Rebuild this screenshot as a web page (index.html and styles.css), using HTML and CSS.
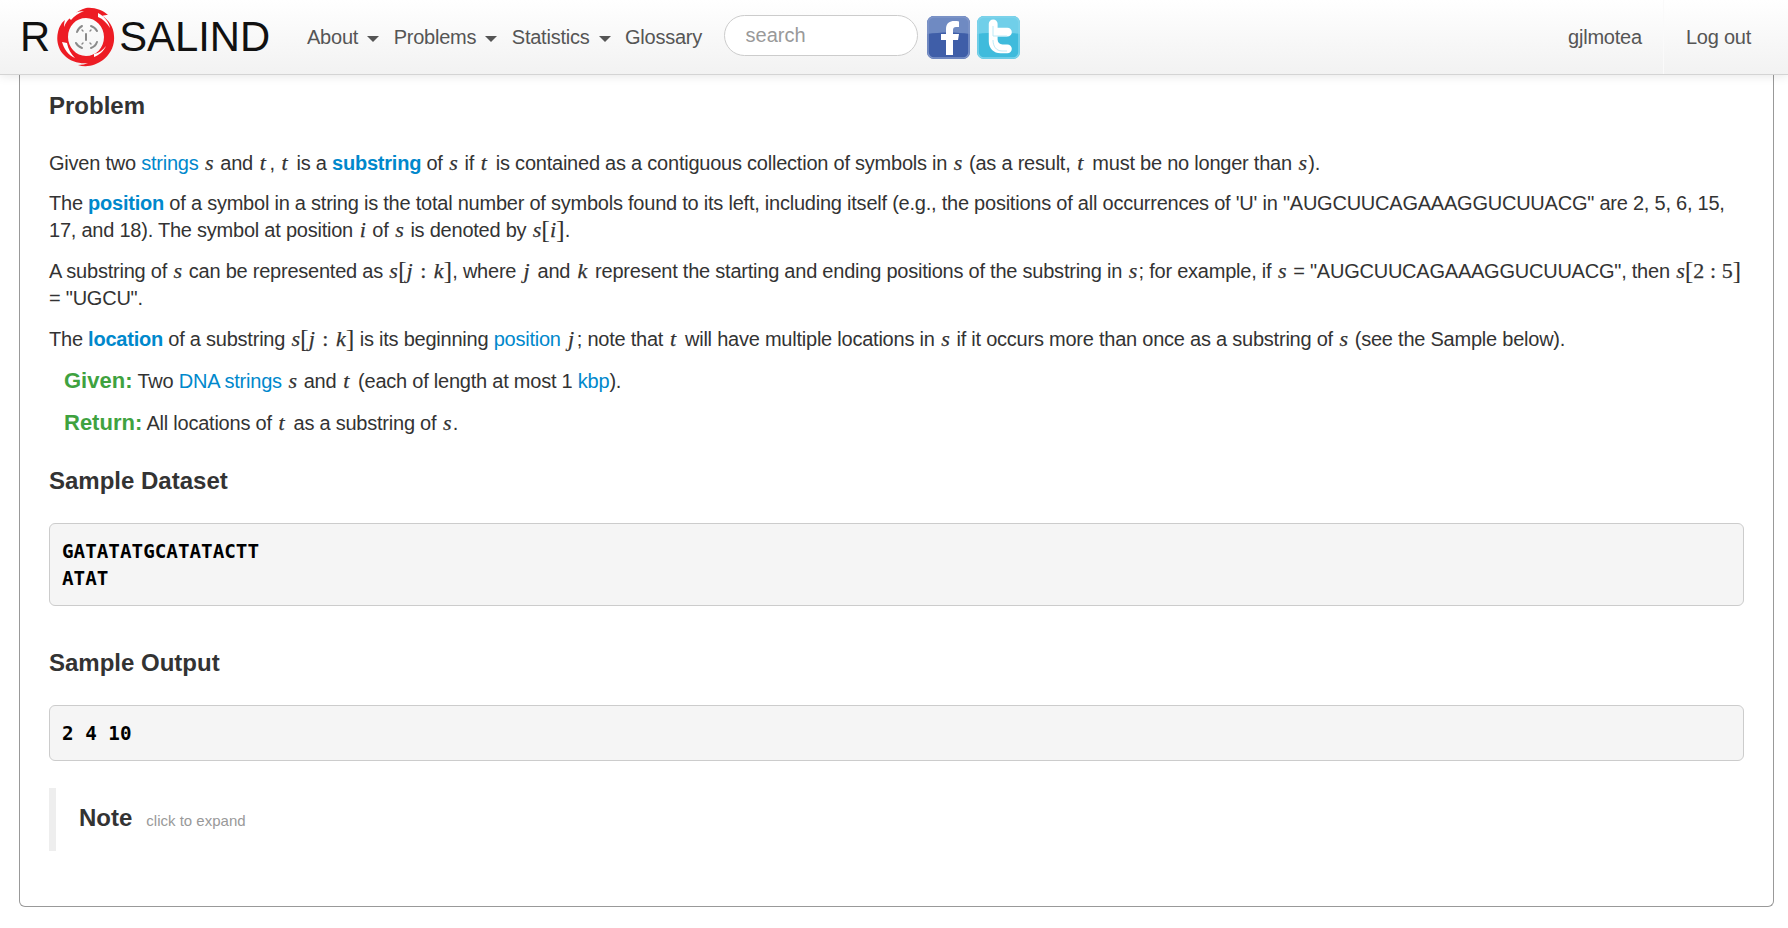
FILE: index.html
```html
<!DOCTYPE html>
<html lang="en">
<head>
<meta charset="utf-8">
<title>Rosalind</title>
<link rel="stylesheet" href="styles.css">
</head>
<body>
<header class="navbar">
  <a class="brand" href="#">
    <span>R</span>
    <svg class="logo" viewBox="0 0 64 64" width="64" height="64" aria-hidden="true">
      <path fill="#ed1c24" d="M32 3C40 2 49 5 54 10C52 10 50 10 48 11C54 14 60 22 60 31C61 42 55 50 49 55C42 60 33 63 24 60C28 60 32 59 34 58C27 59 16 57 10 50C4 44 2 35 4 27C5 22 8 17 11 15C10 18 10 20 10 22C13 14 22 6 32 3ZM32 13C22 13 14 21 14 32C14 42 22 51 32 51C42 51 50 43 50 32C50 22 42 13 32 13Z"/>
      <path fill="#fff" d="M44 8C50 11 55 17 56 23C53 18 49 14 44 12ZM8 37C10 44 14 50 21 53C17 49 14 44 13 38ZM40 52C45 50 50 46 52 41C49 45 45 48 40 49ZM14 12C19 8 24 6 30 6C25 8 20 11 17 15Z"/>
      <g fill="none" stroke="#8a8a8a" stroke-width="2" stroke-linecap="round">
        <path d="M23 27C24 24 26 22 28 21"/>
        <path d="M37 21C40 22 42 24 43 26"/>
        <path d="M43 37C42 40 40 42 37 43"/>
        <path d="M28 43C25 42 23 40 22 38"/>
        <path d="M32 29V35"/>
        <path d="M28 25L29 26M36 26L37 25M28 39L29 38M36 38L37 39" stroke-width="1.4"/>
      </g>
    </svg>
    <span class="brand-rest">SALIND</span>
  </a>
  <nav class="nav-main">
    <a href="#">About<b class="caret"></b></a>
    <a href="#">Problems<b class="caret"></b></a>
    <a href="#">Statistics<b class="caret"></b></a>
    <a href="#">Glossary</a>
  </nav>
  <input class="search" type="text" placeholder="search">
  <div class="social">
    <svg viewBox="0 0 43 43" width="43" height="43" aria-hidden="true">
      <rect width="43" height="43" rx="7" fill="#3f5ea8"/>
      <path d="M0 7a7 7 0 0 1 7-7h29a7 7 0 0 1 7 7v11c-14-2-29-2-43 0z" fill="#6f8ac2"/>
      <rect x="1" y="1" width="41" height="41" rx="6" fill="none" stroke="#7f95c8" stroke-width="1.5"/>
      <path d="M19 39V24h-5v-6h5v-5c0-6 4-8 8-8 2 0 4 0 5 .5v5.500h-3c-2 0-3 1-3 3V18h6l-1 6h-5v15z" fill="#fff"/>
    </svg>
    <svg viewBox="0 0 43 43" width="43" height="43" aria-hidden="true">
      <rect width="43" height="43" rx="7" fill="#3fbbdc"/>
      <path d="M0 7a7 7 0 0 1 7-7h29a7 7 0 0 1 7 7v11c-14-2-29-2-43 0z" fill="#70cfe9"/>
      <rect x="1" y="1" width="41" height="41" rx="6" fill="none" stroke="#7fd3ea" stroke-width="1.5"/>
      <path d="M11 10a4.500 4.500 0 0 1 9 0v4h10a4.500 4.500 0 0 1 0 9H20v3c0 3 2 5 5 5h5a4.500 4.500 0 0 1 0 9h-7c-7 0-12-5-12-12z" fill="#fff" transform="translate(1 -2) scale(.98 .98)"/>
      <path d="M16 10v10h14M16 24c0 6 3 11 9 11h5" fill="none" stroke="#bdeaf6" stroke-width="1"/>
    </svg>
  </div>
  <div class="nav-user">
    <a class="user" href="#">gjlmotea</a>
    <a class="logout" href="#">Log out</a>
  </div>
</header>

<main class="panel">
  <h2 class="first">Problem</h2>
  <p class="lead">Given two <a href="#">strings</a> <i class="m">s</i> and <i class="m t">t</i>, <i class="m t">t</i> is a <a class="term" href="#">substring</a> of <i class="m">s</i> if <i class="m t">t</i> is contained as a contiguous collection of symbols in <i class="m">s</i> (as a result, <i class="m t">t</i> must be no longer than <i class="m">s</i>).</p>
  <p>The <a class="term" href="#">position</a> of a symbol in a string is the total number of symbols found to its left, including itself (e.g., the positions of all occurrences of 'U' in "AUGCUUCAGAAAGGUCUUACG" are 2, 5, 6, 15, 17, and 18). The symbol at position <i class="m">i</i> of <i class="m">s</i> is denoted by <span class="mx"><i>s</i><span class="br">[</span><i>i</i><span class="br">]</span></span>.</p>
  <p>A substring of <i class="m">s</i> can be represented as <span class="mx"><i>s</i><span class="br">[</span><i>j</i> : <i>k</i><span class="br">]</span></span>, where <i class="m jk">j</i> and <i class="m jk">k</i> represent the starting and ending positions of the substring in <i class="m">s</i>; for example, if <i class="m">s</i> = "AUGCUUCAGAAAGGUCUUACG", then <span class="mx"><i>s</i><span class="br">[</span><span class="num">2 : 5</span><span class="br">]</span></span> = "UGCU".</p>
  <p>The <a class="term" href="#">location</a> of a substring <span class="mx"><i>s</i><span class="br">[</span><i>j</i> : <i>k</i><span class="br">]</span></span> is its beginning <a href="#">position</a> <i class="m jk">j</i>; note that <i class="m t">t</i> will have multiple locations in <i class="m">s</i> if it occurs more than once as a substring of <i class="m">s</i> (see the Sample below).</p>
  <p class="task"><b class="label">Given:</b> Two <a href="#">DNA strings</a> <i class="m">s</i> and <i class="m t">t</i> (each of length at most 1 <a href="#">kbp</a>).</p>
  <p class="task"><b class="label">Return:</b> All locations of <i class="m t">t</i> as a substring of <i class="m">s</i>.</p>
  <h2>Sample Dataset</h2>
  <pre>GATATATGCATATACTT
ATAT</pre>
  <h2>Sample Output</h2>
  <pre class="output">2 4 10</pre>
  <div class="note"><strong>Note</strong><small>click to expand</small></div>
</main>
</body>
</html>
```

FILE: styles.css
```css
* { box-sizing: border-box; }
html, body { margin: 0; height: 100%; background: #fff; overflow: hidden; }
body { font-family: "Liberation Sans", Arial, sans-serif; font-size: 20px; line-height: 27px; color: #333; }
a { text-decoration: none; }

.navbar {
  display: flex; align-items: center; height: 75px; padding-left: 20px;
  background: linear-gradient(#fff, #f2f2f2);
  border-bottom: 1px solid #d4d4d4;
  box-shadow: 0 1px 10px rgba(0,0,0,.1);
  position: relative; z-index: 2;
}
.brand { display: flex; align-items: center; width: 287px; color: #111; font-size: 41.800px; line-height: 74px; }
.logo { margin: 0 1px 0 4px; filter: blur(.4px); flex: none; }
.nav-main { display: flex; font-size: 20px; letter-spacing: -.23px; }
.nav-main a { color: #555; margin-right: 14.500px; display: flex; align-items: center; }
.caret { width: 0; height: 0; margin-left: 9px; margin-top: 3px; border: 6px solid transparent; border-top-color: #555; border-bottom: 0; }
.search {
  width: 194px; height: 41px; margin: -3px 0 0 7px; padding: 0 21px;
  border: 1px solid #ccc; border-radius: 21px; background: #fff;
  font: 20px "Liberation Sans", Arial, sans-serif; color: #555;
}
.search::placeholder { color: #999; opacity: 1; }
.social { display: flex; gap: 7px; margin: 0 0 0 9px; filter: blur(.5px); }
.social svg { display: block; }
.nav-user { margin-left: auto; display: flex; align-self: stretch; font-size: 20px; letter-spacing: -.23px; }
.nav-user a { color: #555; display: flex; align-items: center; }
.user { padding-right: 21px; }
.logout { padding: 0 37px 0 22px; border-left: 1px solid #fafafa; }

.panel {
  margin: 0 14px 0 19px; height: 832px; padding: 0 29px;
  border: 1px solid #999; border-top: 0; border-radius: 0 0 6px 6px;
}
h2 { margin: 0; font-size: 24px; line-height: 30px; font-weight: bold; color: #333; }
h2.first { padding-top: 16px; margin-bottom: 29px; }
p { margin: 0 0 14px; letter-spacing: -.23px; }
p.lead { margin-bottom: 13px; }
.panel a { color: #08c; }
.panel a.term { font-weight: bold; }
.m, .mx {
  font-family: "Liberation Serif", "Times New Roman", serif; font-size: 22px; line-height: 0;
  letter-spacing: 0; -webkit-text-stroke: .25px currentColor;
}
.m { margin: 0 1.300px; }
.m.t { margin: 0 3.500px 0 1.500px; }
.m.jk { margin: 0 2.500px 0 2px; }
.mx { white-space: nowrap; margin-left: 1px; word-spacing: 2px; }
.num { word-spacing: 1px; letter-spacing: -.4px; }
.br { font-size: 26px; font-weight: normal; -webkit-text-stroke: 0; position: relative; top: 1px; }
.task { padding-left: 15px; }
.label { color: #3fa23f; font-size: 22px; letter-spacing: 0; }
pre {
  margin: 27px 0 42px; padding: 14px 12px 13px;
  background: #f5f5f5; border: 1px solid #ccc; border-radius: 6px;
  font: bold 19.250px/27px "DejaVu Sans Mono", monospace; color: #000;
}
pre.output { margin-bottom: 27px; }
.task + h2 { margin-top: 29px; }
.note {
  display: flex; align-items: baseline; height: 63px; padding: 16px 0 0 23px;
  border-left: 7px solid #eee;
}
.note strong { font-size: 24px; color: #333; }
.note small { margin-left: 14px; font-size: 15px; color: #999; }
```
